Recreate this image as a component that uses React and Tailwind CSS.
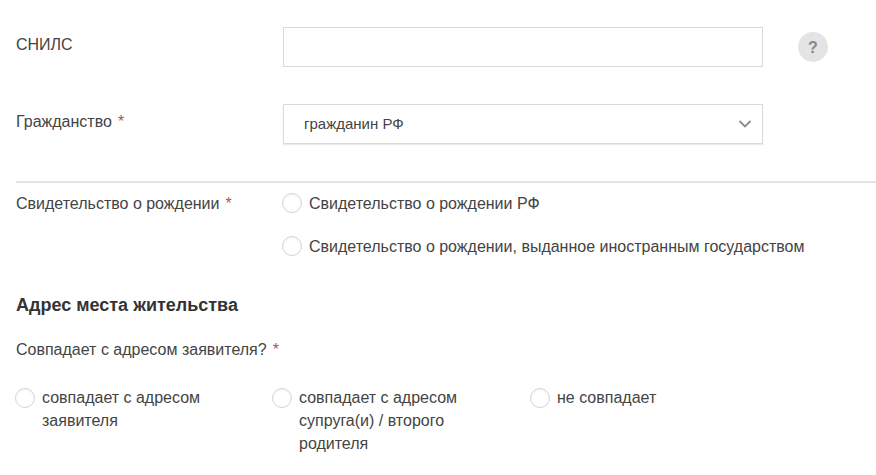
const Star = () => <span className="ml-1.5 text-[#b5534f]">*</span>;

const Radio = ({ children, className = "" }) => (
  <div className={`flex items-start ${className}`}>
    <span className="h-5 w-5 shrink-0 rounded-full border border-[#d4d4d4] bg-white shadow-[inset_0_1px_2px_rgba(0,0,0,0.06)]" />
    {children}
  </div>
);

export default function App() {
  return (
    <div className="h-[475px] w-[876px] overflow-hidden bg-white pl-4 font-['Liberation_Sans',Arial,sans-serif] text-[16px] leading-[23px] text-[#444]">
      <div className="flex pt-[27px]">
        <div className="w-[267px] pt-[6px]">СНИЛС</div>
        <div className="h-10 w-[480px] border border-[#d9d9d9] bg-white" />
        <div className="ml-[35px] mt-[5px] flex h-[30px] w-[30px] items-center justify-center rounded-full bg-[#e4e4e4] text-[16px] font-bold text-[#888]">?</div>
      </div>

      <div className="mt-[37px] flex">
        <div className="w-[267px] pt-[6px]">Гражданство<Star /></div>
        <div className="flex h-10 w-[480px] items-center justify-between border border-[#d9d9d9] pl-5 pr-[10px] shadow-[0_1px_1px_rgba(0,0,0,0.08)]">
          <span className="-mt-px text-[15px]">гражданин РФ</span>
          <svg width="14" height="14" viewBox="0 0 14 14" fill="none" stroke="#8a8a8a" strokeWidth="1.8">
            <path d="M1.5 4 7 9.5 12.5 4" />
          </svg>
        </div>
      </div>

      <div className="mt-[37px] h-0.5 bg-[#e4e4e4]" />

      <div className="mt-2.5 flex">
        <div className="w-[266px] -mt-[1px]">Свидетельство о рождении<Star /></div>
        <div className="flex flex-col gap-[21px]">
          <Radio><span className="ml-[7px] -mt-[1px]">Свидетельство о рождении РФ</span></Radio>
          <Radio><span className="ml-[7px] -mt-[1px]">Свидетельство о рождении, выданное иностранным государством</span></Radio>
        </div>
      </div>

      <h2 className="mt-[36px] text-[18px] font-bold leading-[22px] text-[#333]">Адрес места жительства</h2>

      <div className="mt-[22px]">Совпадает с адресом заявителя?<Star /></div>

      <div className="mt-[27px] flex">
        <Radio className="w-[256px] -ml-px"><span className="ml-[7px] -mt-[2px] w-[190px]">совпадает с адресом заявителя</span></Radio>
        <Radio className="w-[258px] ml-px"><span className="ml-[7px] -mt-[2px] w-[180px]">совпадает с адресом супруга(и) / второго родителя</span></Radio>
        <Radio><span className="ml-[7px] -mt-[2px]">не совпадает</span></Radio>
      </div>
    </div>
  );
}
